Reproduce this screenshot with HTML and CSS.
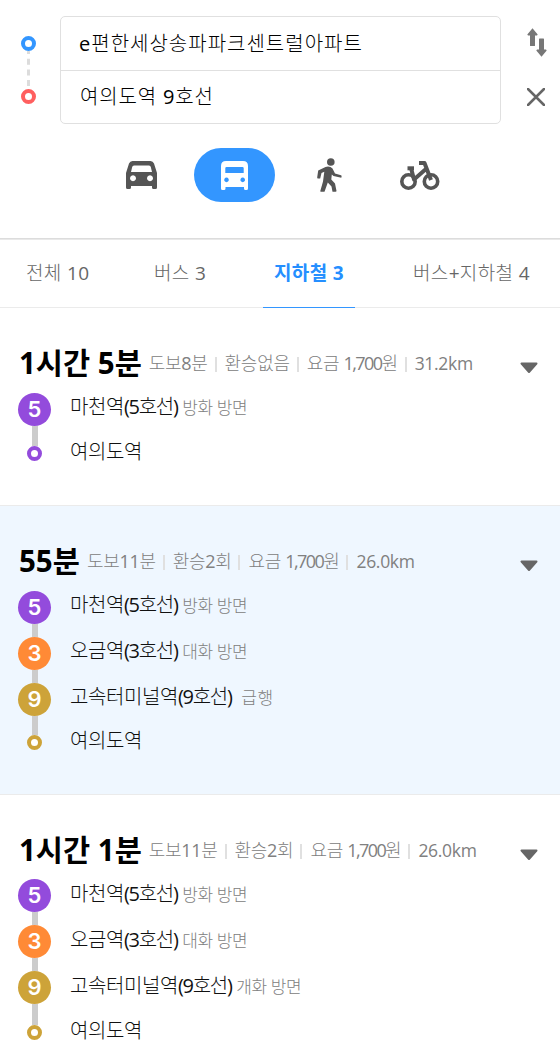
FILE: index.html
```html
<!DOCTYPE html>
<html lang="ko">

<head>
	<title>길찾기</title>
	<meta charset="utf-8">
	<meta name="viewport" content="width=device-width, initial-scale=1.0">
	<link rel="stylesheet" href="styles.css">
</head>

<body>
	<header class="search">
		<div class="search-row">
			<div class="points">
				<i class="dot blue"></i>
				<svg class="dashes" width="3" height="38" viewBox="0 0 3 38"><path d="M1.5 0v38" stroke="#dcdcdc" stroke-width="3" stroke-dasharray="6 4.7" stroke-dashoffset="3" /></svg>
				<i class="dot red"></i>
			</div>
			<div class="fields">
				<div class="field"><span class="field-from">e편한세상송파파크센트럴아파트</span></div>
				<div class="field"><span class="field-to">여의도역 9호선</span></div>
			</div>
			<div class="actions">
				<svg class="swap" width="20" height="29" viewBox="0 0 20 29" fill="#777"><path d="M5.5 0.3 10.7 6.6 10 7.6H8V17.4Q8 18 7.4 18H3.6Q3 18 3 17.4V7.6H1L.3 6.600z" /><path d="M14.500 28.700 9.300 22.400 10 21.400H12V11Q12 10.400 12.600 10.400H16.400Q17 10.400 17 11V21.400H19L19.700 22.400z" /></svg>
				<svg class="close" width="18" height="18" viewBox="0 0 18 18"><path d="M1 1 17 17M17 1 1 17" stroke="#666" stroke-width="2.500" stroke-linecap="round" /></svg>
			</div>
		</div>
		<nav class="modes">
			<span class="mode">
				<svg width="31" height="28" viewBox="0 0 31 28" fill="#555"><path fill-rule="evenodd" d="M6.500 0h18Q27 0 28 2.500L31 12V26.500Q31 28 29.500 28H27.500Q26 28 26 26.500V25H5V26.500Q5 28 3.500 28H1.500Q0 28 0 26.500V12L3 2.500Q4 0 6.500 0zM8 4.500Q6.500 4.500 6.200 6L5 11H26L24.800 6Q24.500 4.500 23 4.500zM7 14.300a3 3 0 1 0 .01 0zM24 14.300a3 3 0 1 0 .01 0z" /></svg>
			</span>
			<span class="mode active">
				<svg width="27" height="29" viewBox="0 0 27 29" fill="#fff"><path fill-rule="evenodd" d="M5 0H22Q27 0 27 5V27.500Q27 29 25.500 29H24.500Q23 29 23 27.500V26H4.500V27.500Q4.500 29 3 29H1.500Q0 29 0 27.500V5Q0 0 5 0zM5.500 6Q4.300 6 4.300 7.200V12H22.700V7.200Q22.700 6 21.500 6zM5.500 16.600a2.300 2.300 0 1 0 .01 0zM21.700 16.600a2.300 2.300 0 1 0 .01 0z" /></svg>
			</span>
			<span class="mode walk-mode">
				<svg width="25" height="34" viewBox="0 0 25 34" fill="#555"><circle cx="13.800" cy="4" r="3.800" /><path d="M8.500 9Q11 8.200 13.500 9L15.500 10.500 18 15.500 24 17.200Q24.800 17.500 24.600 18.400L24.300 19.700 16.500 18 14.800 16.500 14.300 21.500 18 25.500 19.500 33Q19.500 33.800 18.500 33.800H15.500L14.500 28.500 10.800 24.500 7.500 33.800H4Q3 33.800 3.300 33L6 23.500 7.300 13.700 4.500 15 3.200 20.500H1Q0 20.500.2 19.300L1.200 12.500z" /></svg>
			</span>
			<span class="mode">
				<svg width="40" height="29" viewBox="0 0 40 29" fill="none" stroke="#555"><circle cx="8.500" cy="20.500" r="6.700" stroke-width="3.600" /><circle cx="31" cy="20.500" r="6.700" stroke-width="3.600" /><path d="M7.500 7.300H14" stroke-width="4" /><path d="M11 7 14 18.500 26.500 7.500M19 2H24.500L31 19" stroke-width="4" stroke-linejoin="round" /></svg>
			</span>
		</nav>
	</header>

	<nav class="tabs">
		<span class="tab all">전체 10</span>
		<span class="tab bus">버스 3</span>
		<span class="tab subway selected">지하철 3</span>
		<span class="tab mixed">버스+지하철 4</span>
	</nav>

	<main>
		<section class="route first">
			<div class="summary">
				<strong class="time">1시간 5분</strong>
				<span class="info walk">도보8분</span>
				<span class="info">환승없음</span>
				<span class="info">요금 <span class="fare">1,700</span>원</span>
				<span class="info km">31.2km</span>
				<svg class="arrow" width="18" height="12" viewBox="0 0 18 12"><path d="M1.500 1.500H16.500L9 10z" fill="#666" stroke="#666" stroke-width="2" stroke-linejoin="round" /></svg>
			</div>
			<div class="stop last-ride">
				<div class="track"><b class="badge line5">5</b><i class="rail"></i></div>
				<p class="station">마천역<span class="line-name">(5호선)</span> <small>방화 방면</small></p>
			</div>
			<div class="stop end">
				<div class="track"><i class="dot line5"></i></div>
				<p class="station">여의도역</p>
			</div>
		</section>

		<section class="route focused">
			<div class="summary">
				<strong class="time">55분</strong>
				<span class="info walk">도보11분</span>
				<span class="info">환승2회</span>
				<span class="info">요금 <span class="fare">1,700</span>원</span>
				<span class="info km">26.0km</span>
				<svg class="arrow" width="18" height="12" viewBox="0 0 18 12"><path d="M1.500 1.500H16.500L9 10z" fill="#666" stroke="#666" stroke-width="2" stroke-linejoin="round" /></svg>
			</div>
			<div class="stop">
				<div class="track"><b class="badge line5">5</b><i class="rail"></i></div>
				<p class="station">마천역<span class="line-name">(5호선)</span> <small>방화 방면</small></p>
			</div>
			<div class="stop">
				<div class="track"><b class="badge line3">3</b><i class="rail"></i></div>
				<p class="station">오금역<span class="line-name">(3호선)</span> <small>대화 방면</small></p>
			</div>
			<div class="stop last-ride">
				<div class="track"><b class="badge line9">9</b><i class="rail"></i></div>
				<p class="station">고속터미널역<span class="line-name">(9호선)</span> <small class="express">급행</small></p>
			</div>
			<div class="stop end">
				<div class="track"><i class="dot line9"></i></div>
				<p class="station">여의도역</p>
			</div>
		</section>

		<section class="route third">
			<div class="summary">
				<strong class="time">1시간 1분</strong>
				<span class="info walk">도보11분</span>
				<span class="info">환승2회</span>
				<span class="info">요금 <span class="fare">1,700</span>원</span>
				<span class="info km">26.0km</span>
				<svg class="arrow" width="18" height="12" viewBox="0 0 18 12"><path d="M1.500 1.500H16.500L9 10z" fill="#666" stroke="#666" stroke-width="2" stroke-linejoin="round" /></svg>
			</div>
			<div class="stop">
				<div class="track"><b class="badge line5">5</b><i class="rail"></i></div>
				<p class="station">마천역<span class="line-name">(5호선)</span> <small>방화 방면</small></p>
			</div>
			<div class="stop">
				<div class="track"><b class="badge line3">3</b><i class="rail"></i></div>
				<p class="station">오금역<span class="line-name">(3호선)</span> <small>대화 방면</small></p>
			</div>
			<div class="stop last-ride">
				<div class="track"><b class="badge line9">9</b><i class="rail"></i></div>
				<p class="station">고속터미널역<span class="line-name">(9호선)</span> <small>개화 방면</small></p>
			</div>
			<div class="stop end">
				<div class="track"><i class="dot line9"></i></div>
				<p class="station">여의도역</p>
			</div>
		</section>
	</main>
</body>

</html>
```
FILE: styles.css
```css
* {
	box-sizing: border-box;
}

body {
	margin: 0;
	height: 1064px;
	overflow: hidden;
	background: #fff;
	color: #222;
	font-family: "Open Sans", "Noto Sans CJK KR Light", "Noto Sans CJK KR", sans-serif;
	white-space: nowrap;
}

svg {
	display: block;
	flex: none;
}

/* search header */
.search {
	height: 240px;
	padding-top: 16px;
	border-bottom: 1px solid #e9e9e9;
	box-shadow: inset 0 -1px 0 #dcdcdc;
}

.search-row {
	display: flex;
	height: 108px;
}

.points {
	display: flex;
	flex-direction: column;
	align-items: center;
	width: 60px;
	padding: 20px 3px 0 0;
}

.dot {
	flex: none;
	width: 15px;
	height: 15px;
	border: 4px solid;
	border-radius: 50%;
	background: #fff;
}

.blue {
	border-color: #3396ff;
}

.red {
	border-color: #ff5f5f;
}

.fields {
	width: 441px;
	border: 1px solid #e0e0e0;
	border-radius: 5px;
}

.field {
	height: 53px;
	padding-left: 18px;
	color: #000;
	font-size: 20px;
	line-height: 53px;
}

.field + .field {
	padding-left: 19px;
	border-top: 1px solid #e0e0e0;
	line-height: 51px;
}

.field-from {
	letter-spacing: 1px;
}

.field-to {
	letter-spacing: 0.85px;
}

.actions {
	display: flex;
	flex-direction: column;
	gap: 31px;
	padding: 12px 0 0 26px;
}

.modes {
	display: flex;
	height: 54px;
	margin: 24px 0 0 101px;
	gap: 13px;
}

.mode {
	display: flex;
	align-items: center;
	justify-content: center;
	width: 81px;
	border-radius: 27px;
}

.mode.active {
	margin-left: -1.5px;
	background: #3396ff;
}

.walk-mode {
	padding-left: 2px;
}

.mode:last-child {
	margin-left: -2px;
}

/* tabs */
.tabs {
	display: flex;
	height: 68px;
	border-bottom: 1px solid #ebebeb;
	font-size: 19px;
	line-height: 66px;
	letter-spacing: 0.35px;
	color: #666;
}

.tab {
	height: 68px;
}

.all {
	width: 128px;
	padding-left: 26px;
}

.bus {
	width: 135px;
	padding-left: 26px;
}

.subway {
	width: 92px;
	text-align: center;
}

.mixed {
	padding-left: 58px;
}

.selected {
	border-bottom: 1px solid #3396ff;
	color: #258fff;
	font-family: "Open Sans", "Noto Sans CJK KR", sans-serif;
	font-weight: 700;
}

/* routes */
.route {
	height: 289px;
	padding: 35px 0 0 18px;
	border-bottom: 1px solid #ebebeb;
}

.route.first {
	height: 198px;
}

.focused {
	background: #eff7ff;
}

.third {
	padding-top: 34px;
}

.summary {
	display: flex;
	height: 50px;
	line-height: 40px;
}

.third .summary {
	padding-top: 1px;
}

.time {
	margin: 0 7px 0 1px;
	color: #000;
	font-family: "Open Sans", "Noto Sans CJK KR", sans-serif;
	font-size: 29.5px;
}

.info {
	display: flex;
	align-items: center;
	height: 40px;
	color: #808080;
	font-size: 18px;
	letter-spacing: -0.3px;
	white-space: pre;
}

.info + .info::before {
	content: "";
	width: 2px;
	height: 15px;
	margin: 2px 8px 0 7px;
	background: #e0e0e0;
}

.fare {
	letter-spacing: -1.6px;
}

.info.km {
	font-size: 17.5px;
}

.arrow {
	margin: 19px 22px 0 auto;
}

.stop {
	display: flex;
	height: 46px;
}

.last-ride {
	height: 52px;
}

.first .last-ride {
	height: 53px;
}

.third .last-ride {
	height: 54px;
}

.track {
	display: flex;
	flex-direction: column;
	align-items: center;
	width: 33px;
	margin-right: 19px;
}

.badge {
	width: 33px;
	height: 33px;
	border-radius: 50%;
	color: #fff;
	font-family: Inter, "Liberation Sans", sans-serif;
	font-size: 22px;
	font-weight: 600;
	line-height: 33px;
	text-align: center;
}

.badge.line5 {
	background: #934bdc;
}

.badge.line3 {
	background: #ff8a36;
}

.badge.line9 {
	background: #cda339;
}

.dot.line5 {
	border-color: #934bdc;
}

.dot.line9 {
	border-color: #cda339;
}

.rail {
	flex: 1;
	width: 6px;
	margin-left: 1px;
	background: #ccc;
}

.station {
	height: 26px;
	margin: 1px 0 0;
	color: #111;
	font-size: 20px;
	line-height: 26px;
	letter-spacing: -0.4px;
}

.third .station {
	margin-top: 2px;
}

.line-name {
	letter-spacing: -1.3px;
}

.station small {
	color: #808080;
	font-size: 17px;
}

.station .express {
	margin-left: 5px;
	letter-spacing: 0.5px;
}

.end .station,
.third .end .station {
	margin-top: -7px;
}
```
